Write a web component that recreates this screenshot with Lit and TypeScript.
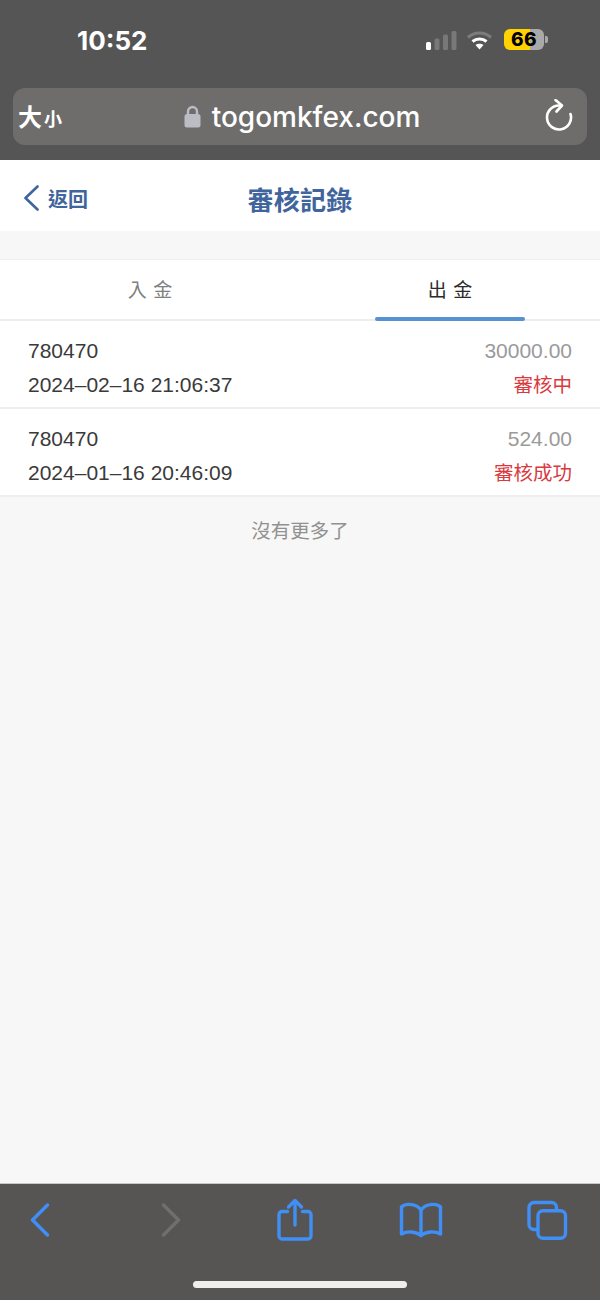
import { LitElement, html, css, svg } from 'lit';
import { customElement, state } from 'lit/decorators.js';

interface Rec {
  id: string;
  time: string;
  amount: string;
  status: string;
}

const records: Rec[] = [
  { id: '780470', time: '2024–02–16 21:06:37', amount: '30000.00', status: '審核中' },
  { id: '780470', time: '2024–01–16 20:46:09', amount: '524.00', status: '審核成功' },
];

const icon = (w: number, h: number, body: unknown) => html`
  <svg width=${w} height=${h} viewBox="0 0 ${w} ${h}" fill="none" stroke="currentColor"
    stroke-width="3.4" stroke-linecap="round" stroke-linejoin="round">${body}</svg>
`;

@customElement('app-root')
export class AppRoot extends LitElement {
  @state() tab = 1;

  static styles = css`
    :host {
      display: block;
      width: 600px;
      height: 1300px;
      background: #f8f7f7;
      font-family: "Liberation Sans", "Noto Sans CJK TC", sans-serif;
      overflow: hidden;
    }
    .page {
      height: 1300px;
      display: flex;
      flex-direction: column;
    }
    .top {
      height: 160px;
      box-sizing: border-box;
      background: #565555;
      padding: 0 13px;
    }
    .status {
      height: 88px;
      display: flex;
      align-items: flex-start;
      justify-content: space-between;
    }
    .clock {
      margin: 27px 0 0 64px;
      color: #fff;
      font-family: Inter, "Liberation Sans", sans-serif;
      font-size: 26px;
      line-height: 28px;
      font-weight: 700;
    }
    .indicators {
      display: flex;
      align-items: center;
      margin: 29px 43px 0 0;
    }
    .batt {
      position: relative;
      margin-left: 11px;
      width: 40px;
      height: 21px;
      border-radius: 6px;
      background: linear-gradient(90deg, #ffd200 0 66%, #a9a9a9 66%);
      color: #000;
      font-family: Inter, "Liberation Sans", sans-serif;
      font-size: 19px;
      line-height: 21px;
      font-weight: 800;
      letter-spacing: 0.5px;
      text-align: center;
    }
    .batt::after {
      content: "";
      position: absolute;
      right: -4px;
      top: 7px;
      width: 3px;
      height: 7px;
      border-radius: 0 2px 2px 0;
      background: #a9a9a9;
    }
    .url {
      height: 57px;
      border-radius: 12px;
      background: #6e6d6c;
      color: #fff;
      display: grid;
      grid-template-columns: 60px 1fr 60px;
      align-items: center;
    }
    .size {
      padding: 0 0 2px 5px;
      font-size: 24px;
      font-weight: 700;
      white-space: nowrap;
      display: flex;
      align-items: baseline;
      gap: 2px;
    }
    .size small {
      font-size: 18px;
    }
    .domain {
      display: flex;
      align-items: center;
      justify-content: center;
      gap: 11px;
      font-size: 28px;
      font-weight: 500;
      font-family: Inter, "Liberation Sans", sans-serif;
      padding-left: 4px;
    }
    .reload {
      display: flex;
      justify-content: flex-end;
      padding: 0 14px 3px 0;
    }
    .nav {
      height: 71px;
      box-sizing: border-box;
      padding-top: 5px;
      background: #fff;
      display: grid;
      grid-template-columns: 1fr auto 1fr;
      align-items: center;
      color: #3f659c;
    }
    .back {
      display: flex;
      align-items: center;
      gap: 9px;
      padding-left: 24px;
      font-size: 20px;
      font-weight: 700;
    }
    .title {
      font-size: 26px;
      font-weight: 700;
      letter-spacing: 0.3px;
    }
    .tabs {
      margin-top: 28px;
      height: 62px;
      box-sizing: border-box;
      background: #fff;
      border-top: 1px solid #f0eff0;
      border-bottom: 2px solid #eeeeef;
      display: grid;
      grid-template-columns: 1fr 1fr;
    }
    .tab {
      position: relative;
      display: flex;
      align-items: center;
      justify-content: center;
      font-size: 19px;
      letter-spacing: 6.5px;
      padding-left: 6.5px;
      color: #808080;
      box-sizing: border-box;
      padding-bottom: 2px;
    }
    .tab.on {
      color: #2c2c2c;
    }
    .tab.on::after {
      content: "";
      position: absolute;
      left: 75px;
      right: 75px;
      bottom: -2px;
      height: 4px;
      border-radius: 2px;
      background: #5692cf;
    }
    .row {
      height: 88px;
      box-sizing: border-box;
      background: #fff;
      border-bottom: 2px solid #efeef2;
      padding: 13px 28px 0;
      display: grid;
      grid-template-columns: 1fr auto;
      grid-auto-rows: 34px;
      align-items: center;
      font-size: 21px;
      color: #3a3a3a;
    }
    .row:last-of-type {
      height: 87px;
      padding-top: 15px;
      grid-auto-rows: 33px;
      border-bottom: 1px solid #eeeeee;
    }
    .amount {
      text-align: right;
      color: #9a9a9a;
    }
    .state {
      text-align: right;
      font-size: 19.5px;
      padding-bottom: 3px;
      color: #d83a3f;
    }
    .more {
      text-align: center;
      margin-top: 21px;
      font-size: 19.5px;
      line-height: 26px;
      color: #919191;
    }
    .spacer {
      flex: 1;
    }
    .bar {
      position: relative;
      height: 117px;
      box-sizing: border-box;
      background: #565554;
      border-top: 1px solid #c9c9c9;
      color: #3f8ff7;
    }
    .tools {
      display: grid;
      grid-template-columns: 80px 182px 66px 186px 66px;
    }
    .tool {
      height: 72px;
      display: flex;
      align-items: center;
      justify-content: center;
    }
    .tool.off {
      color: #6f6f6f;
    }
    .home {
      position: absolute;
      left: 193px;
      top: 97px;
      width: 214px;
      height: 7px;
      border-radius: 4px;
      background: #eeeeee;
    }
  `;

  render() {
    return html`
      <div class="page">
        <div class="top">
          <div class="status">
            <div class="clock">10:52</div>
            <div class="indicators">
              <svg width="31" height="20" viewBox="0 0 31 20">
                <rect x="0" y="12" width="5" height="8" rx="1.5" fill="#fff"></rect>
                <rect x="8.5" y="8.500" width="5" height="11.500" rx="1.5" fill="#787878"></rect>
                <rect x="17" y="4.500" width="5" height="15.500" rx="1.5" fill="#787878"></rect>
                <rect x="25.500" y="1" width="5" height="19" rx="1.5" fill="#787878"></rect>
              </svg>
              <svg style="margin-left:9px" width="27" height="20" viewBox="0 0 27 20" fill="none" stroke-linecap="butt">
                <path d="M2 7.500C8.500 1.500 18.500 1.500 25 7.500" stroke="#7c7c7c" stroke-width="3.200"></path>
                <path d="M6.500 11.500C10.500 8 16.500 8 20.500 11.500" stroke="#fff" stroke-width="3"></path>
                <path d="M13.500 19.500L9.500 15C11.700 13.300 15.300 13.300 17.500 15Z" fill="#fff"></path>
              </svg>
              <div class="batt">66</div>
            </div>
          </div>
          <div class="url">
            <div class="size">大<small>小</small></div>
            <div class="domain">
              <svg width="17" height="23" viewBox="0 0 17 23" fill="none">
                <path d="M4 10V6.500a4.500 4.500 0 0 1 9 0V10" stroke="#bcbcc4" stroke-width="2.400"></path>
                <rect x="0.500" y="9" width="16" height="13.500" rx="2.500" fill="#bcbcc4"></rect>
              </svg>
              <span>togomkfex.com</span>
            </div>
            <div class="reload">
              <svg width="28" height="32" viewBox="0 0 28 32" fill="none" stroke="#fff" stroke-width="2.600"
                stroke-linecap="round" stroke-linejoin="round">
                <path d="M14 6.500A12 12 0 1 0 25.500 15"></path>
                <path d="M10.500 1L17 6.500L11.500 12.500"></path>
              </svg>
            </div>
          </div>
        </div>

        <div class="nav">
          <div class="back">
            <svg width="15" height="26" viewBox="0 0 15 26" fill="none" stroke="#3f659c" stroke-width="2.600"
              stroke-linecap="round" stroke-linejoin="round"><path d="M13.500 1.500L1.500 13L13.500 24.500"></path></svg>
            <span>返回</span>
          </div>
          <div class="title">審核記錄</div>
          <div></div>
        </div>

        <div class="tabs">
          ${['入金', '出金'].map(
            (t, i) => html`<div class="tab ${i === this.tab ? 'on' : ''}" @click=${() => (this.tab = i)}>${t}</div>`
          )}
        </div>

        ${records.map(
          (r) => html`
            <div class="row">
              <div>${r.id}</div>
              <div class="amount">${r.amount}</div>
              <div>${r.time}</div>
              <div class="state">${r.status}</div>
            </div>
          `
        )}
        <div class="more">沒有更多了</div>
        <div class="spacer"></div>

        <div class="bar">
          <div class="tools">
            <div class="tool">
              ${icon(20, 34, svg`<path d="M17.500 2L2.500 17L17.500 32" />`)}
            </div>
            <div class="tool off">
              ${icon(20, 34, svg`<path d="M2.500 2L17.500 17L2.500 32" />`)}
            </div>
            <div class="tool">
              ${icon(36, 44, svg`
                <path d="M10.500 13.500H5a3 3 0 0 0-3 3V38a3 3 0 0 0 3 3H31a3 3 0 0 0 3-3V16.500a3 3 0 0 0-3-3H25.500" />
                <path d="M18 27V3" />
                <path d="M11.500 9L18 2.500L24.500 9" />
              `)}
            </div>
            <div class="tool">
              ${icon(44, 36, svg`
                <path d="M22 8C18 2 7 0.500 2.500 5V32C8 29 17 29 22 33.500C27 29 36 29 41.500 32V5C37 0.500 26 2 22 8Z" />
                <path d="M22 8V33" />
              `)}
            </div>
            <div class="tool">
              ${icon(42, 40, svg`
                <path d="M11 29.500H8a5 5 0 0 1-5-5V7.500a5 5 0 0 1 5-5H25.500a5 5 0 0 1 5 5V10.500" />
                <rect x="12" y="10.700" width="27.500" height="27.500" rx="5" />
              `)}
            </div>
          </div>
          <div class="home"></div>
        </div>
      </div>
    `;
  }
}
